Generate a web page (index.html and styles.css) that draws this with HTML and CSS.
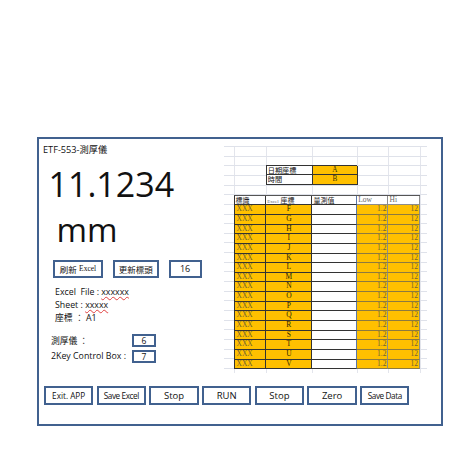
FILE: index.html
```html
<!DOCTYPE html>
<html>
<head>
<meta charset="utf-8">
<link rel="stylesheet" href="styles.css">
</head>
<body>
<div class="frame">
  <div class="top">
    <div class="left">
      <div class="title">ETF-553-<span class="cjk">測厚儀</span></div>
      <div class="value">11.1234</div>
      <div class="unit">mm</div>
      <div class="btnrow">
        <div class="btn b1"><span class="cjk">刷新</span>&nbsp;<span class="sm">Excel</span></div>
        <div class="btn b2 cjk">更新標頭</div>
        <div class="btn b3">16</div>
      </div>
      <div class="info">
        <div>Excel&nbsp; File : <span class="sq">xxxxxx</span></div>
        <div>Sheet : <span class="sq">xxxxx</span></div>
        <div><span class="cjk">座標</span> <span class="cjk">：</span> A1</div>
      </div>
      <div class="field"><span class="lbl"><span class="cjk">測厚儀 ：</span></span><span class="box">6</span></div>
      <div class="field f2"><span class="lbl">2Key Control Box :</span><span class="box">7</span></div>
    </div>
    <div class="sheet">
      <div class="mini">
        <div class="mc lab">日期座標</div><div class="mc org">A</div>
        <div class="mc lab">時間</div><div class="mc org">B</div>
      </div>
      <div class="grid">
        <div class="hd cjk">標識</div><div class="hd"><span class="tiny">Excel</span> <span class="cjk">座標</span></div><div class="hd cjk dd">量測值</div><div class="hd ee">Low</div><div class="hd ee">Hi</div>

        <div class="x">XXX</div><div class="l">F</div><div class="m"></div><div class="n">1.2</div><div class="n">12</div>
        <div class="x">XXX</div><div class="l">G</div><div class="m"></div><div class="n">1.2</div><div class="n">12</div>
        <div class="x">XXX</div><div class="l">H</div><div class="m"></div><div class="n">1.2</div><div class="n">12</div>
        <div class="x">XXX</div><div class="l">I</div><div class="m"></div><div class="n">1.2</div><div class="n">12</div>
        <div class="x">XXX</div><div class="l">J</div><div class="m"></div><div class="n">1.2</div><div class="n">12</div>
        <div class="x">XXX</div><div class="l">K</div><div class="m"></div><div class="n">1.2</div><div class="n">12</div>
        <div class="x">XXX</div><div class="l">L</div><div class="m"></div><div class="n">1.2</div><div class="n">12</div>
        <div class="x">XXX</div><div class="l">M</div><div class="m"></div><div class="n">1.2</div><div class="n">12</div>
        <div class="x">XXX</div><div class="l">N</div><div class="m"></div><div class="n">1.2</div><div class="n">12</div>
        <div class="x">XXX</div><div class="l">O</div><div class="m"></div><div class="n">1.2</div><div class="n">12</div>
        <div class="x">XXX</div><div class="l">P</div><div class="m"></div><div class="n">1.2</div><div class="n">12</div>
        <div class="x">XXX</div><div class="l">Q</div><div class="m"></div><div class="n">1.2</div><div class="n">12</div>
        <div class="x">XXX</div><div class="l">R</div><div class="m"></div><div class="n">1.2</div><div class="n">12</div>
        <div class="x">XXX</div><div class="l">S</div><div class="m"></div><div class="n">1.2</div><div class="n">12</div>
        <div class="x">XXX</div><div class="l">T</div><div class="m"></div><div class="n">1.2</div><div class="n">12</div>
        <div class="x">XXX</div><div class="l">U</div><div class="m"></div><div class="n">1.2</div><div class="n">12</div>
        <div class="x">XXX</div><div class="l">V</div><div class="m"></div><div class="n">1.2</div><div class="n">12</div>
      </div>
    </div>
  </div>
  <div class="bottom">
    <div class="bb small">Exit. APP</div>
    <div class="bb small cond">Save Excel</div>
    <div class="bb">Stop</div>
    <div class="bb">RUN</div>
    <div class="bb">Stop</div>
    <div class="bb">Zero</div>
    <div class="bb small cond">Save Data</div>
  </div>
</div>
</body>
</html>
```

FILE: styles.css
```css
html, body {
  margin: 0;
  padding: 0;
  background: #ffffff;
}

body {
  font-family: "Open Sans", "Noto Sans CJK TC", sans-serif;
  color: #111111;
}

.cjk {
  font-family: "Noto Sans CJK TC", sans-serif;
}

.frame {
  margin: 137px 0 0 37px;
  width: 406px;
  height: 289px;
  box-sizing: border-box;
  border: 2px solid #41618f;
  display: flex;
  flex-direction: column;
}

.top {
  display: flex;
  align-items: flex-start;
}

.left {
  width: 185px;
  display: flex;
  flex-direction: column;
}

.title {
  margin-top: 4px;
  padding-left: 4px;
  font-size: 9.2px;
  line-height: 12px;
  white-space: nowrap;
}

.value {
  margin-top: 11px;
  padding-left: 9.5px;
  font-size: 34px;
  line-height: 34px;
  white-space: nowrap;
}

.unit {
  margin-top: 12.4px;
  padding-left: 17.5px;
  font-size: 33px;
  line-height: 33px;
}

.btnrow {
  margin-top: 13.6px;
  padding-left: 14px;
  display: flex;
  gap: 9.8px;
}

.btn {
  height: 18px;
  box-sizing: border-box;
  border: 2px solid #41618f;
  display: flex;
  align-items: center;
  justify-content: center;
  font-size: 8.5px;
  white-space: nowrap;
}

.b1 { width: 50px; }
.b2 { width: 46px; font-size: 8.5px; }
.b3 { width: 33px; font-size: 9px; }

.sm {
  font-size: 7.5px;
  font-family: "Liberation Serif", serif;
}

.info {
  margin-top: 8.3px;
  padding-left: 16px;
  font-size: 8.8px;
  line-height: 12.8px;
  white-space: nowrap;
}

.sq {
  text-decoration: underline wavy #e04040;
  text-decoration-thickness: 1px;
  text-underline-offset: 1px;
}

.field {
  margin-top: 9.3px;
  padding-left: 12px;
  display: flex;
  align-items: center;
  height: 13px;
  font-size: 8.8px;
  white-space: nowrap;
}

.f2 {
  margin-top: 3px;
}

.lbl {
  width: 81px;
}

.box {
  width: 24px;
  height: 13px;
  box-sizing: border-box;
  border: 2px solid #41618f;
  display: flex;
  align-items: center;
  justify-content: center;
  font-size: 8.5px;
}

/* spreadsheet */
.sheet {
  width: 203px;
  height: 227.5px;
  margin-top: 6.5px;
  display: flex;
  flex-direction: column;
  background-image:
    repeating-linear-gradient(to bottom, #dfe2ea 0, #dfe2ea 1px, transparent 1px, transparent 9.65px),
    linear-gradient(#e3e5ec, #e3e5ec),
    linear-gradient(#e3e5ec, #e3e5ec),
    linear-gradient(#e3e5ec, #e3e5ec),
    linear-gradient(#e3e5ec, #e3e5ec),
    linear-gradient(#e3e5ec, #e3e5ec),
    linear-gradient(#e3e5ec, #e3e5ec);
  background-size: 100% 100%, 1px 100%, 1px 100%, 1px 100%, 1px 100%, 1px 100%, 1px 100%;
  background-position: 0 0, 10px 0, 41.7px 0, 88px 0, 132.7px 0, 164px 0, 195.5px 0;
  background-repeat: no-repeat;
}

.mini {
  margin-top: 19.3px;
  margin-left: 41.7px;
  width: 91px;
  display: grid;
  grid-template-columns: 46.3px 44.7px;
  grid-auto-rows: 9.65px;
  border-top: 1px solid #333333;
  border-left: 1px solid #333333;
  box-sizing: border-box;
}

.mc {
  box-sizing: border-box;
  border-right: 1px solid #333333;
  border-bottom: 1px solid #333333;
  font-size: 7.2px;
  line-height: 8.4px;
  white-space: nowrap;
  overflow: hidden;
}

.lab {
  background: #ffffff;
  font-family: "Noto Sans CJK TC", sans-serif;
  padding-left: 1px;
}

.org {
  background: #ffc000;
  text-align: center;
  font-family: "Liberation Serif", serif;
  color: #3b3000;
}

.grid {
  margin-top: 9.65px;
  margin-left: 9.5px;
  display: grid;
  grid-template-columns: 31.7px 46.3px 44.7px 31.3px 31.5px;
  grid-auto-rows: 9.65px;
  border-top: 1px solid #555555;
  border-left: 1px solid #333333;
  width: max-content;
}

.grid > div {
  box-sizing: border-box;
  border-right: 1px solid #333333;
  border-bottom: 1px solid #333333;
  font-family: "Liberation Serif", serif;
  font-size: 7.5px;
  line-height: 8.6px;
  white-space: nowrap;
  overflow: hidden;
}

.grid > .hd {
  background: #ffffff;
  padding-left: 1px;
  color: #222222;
}

.grid > .hd.cjk {
  font-family: "Noto Sans CJK TC", sans-serif;
  font-size: 7px;
}

.tiny {
  font-size: 5px;
  color: #666666;
}

.hd .cjk {
  font-size: 7px;
}

.grid > .ee {
  border-bottom-color: #8c8c8c;
  border-right-color: #8c8c8c;
  color: #666666;
}

.grid > .dd,
.grid > .m {
  border-right-color: #5b78a8;
}

.grid > .x {
  background: #ffc000;
  color: #6e6136;
  padding-left: 2px;
}

.grid > .l {
  background: #ffc000;
  color: #2e2600;
  text-align: center;
}

.grid > .m {
  background: #ffffff;
}

.grid > .n {
  background: #ffc000;
  color: #6e6136;
  text-align: right;
  padding-right: 1px;
  border-right-color: #8c8c8c;
  border-bottom-color: #8c7a40;
}

/* bottom buttons */
.bottom {
  margin-top: 12.7px;
  padding-left: 5px;
  display: flex;
  gap: 3.4px;
}

.bb {
  width: 49.3px;
  height: 19.3px;
  box-sizing: border-box;
  border: 2px solid #41618f;
  display: flex;
  align-items: center;
  justify-content: center;
  font-size: 9.5px;
  white-space: nowrap;
}

.bb.small {
  font-size: 8.2px;
}

.bb.cond {
  letter-spacing: -0.4px;
}
```
